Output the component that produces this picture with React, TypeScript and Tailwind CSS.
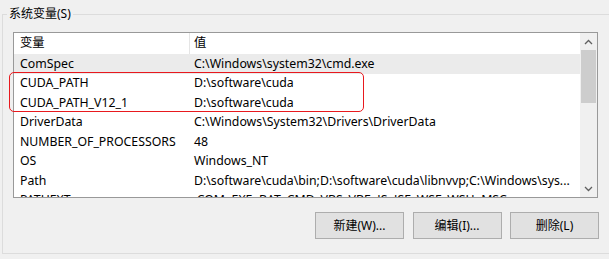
import React from 'react';

const rows = [
  { name: 'ComSpec', value: 'C:\\Windows\\system32\\cmd.exe', selected: true },
  { name: 'CUDA_PATH', value: 'D:\\software\\cuda' },
  { name: 'CUDA_PATH_V12_1', value: 'D:\\software\\cuda' },
  { name: 'DriverData', value: 'C:\\Windows\\System32\\Drivers\\DriverData' },
  { name: 'NUMBER_OF_PROCESSORS', value: '48' },
  { name: 'OS', value: 'Windows_NT' },
  { name: 'Path', value: 'D:\\software\\cuda\\bin;D:\\software\\cuda\\libnvvp;C:\\Windows\\sys...' },
  { name: 'PATHEXT', value: '.COM;.EXE;.BAT;.CMD;.VBS;.VBE;.JS;.JSE;.WSF;.WSH;.MSC' },
];

function Chevron({ up }: { up?: boolean }) {
  return (
    <svg width="9" height="6" viewBox="0 0 9 6" className="block">
      <path
        d={up ? 'M1 5 L4.5 1.5 L8 5' : 'M1 1 L4.5 4.5 L8 1'}
        fill="none"
        stroke="#606060"
        strokeWidth="1.3"
      />
    </svg>
  );
}

function Button({ label }: { label: string }) {
  return (
    <button className="w-[89px] h-[27px] bg-[#e1e1e1] border border-[#adadad] text-[12px] text-black leading-none">
      {label}
    </button>
  );
}

export default function App() {
  return (
    <div
      className="relative w-[609px] h-[259px] overflow-hidden bg-[#f0f0f0] text-black"
      style={{ fontFamily: '"Noto Sans", "Noto Sans CJK SC", sans-serif' }}
    >
      <fieldset className="ml-[2px] mt-[6px] w-[620px] h-[248px] border border-[#dcdcdc] p-0">
        <legend className="ml-[4px] px-[2px] text-[12px] leading-[16px]">系统变量(S)</legend>

        <div className="ml-[10px] mt-[10px] w-[585px] h-[166px] border border-[#999999] bg-white flex">
          <div className="flex-1 overflow-hidden text-[12.3px]">
            <div className="flex h-[21px] items-center">
              <div className="w-[176px] h-full flex items-center pl-[6px] border-r border-[#e5e5e5]">变量</div>
              <div className="pl-[4px]">值</div>
            </div>
            {rows.map((r) => (
              <div
                key={r.name}
                className={`flex h-[19.5px] items-center whitespace-nowrap ${r.selected ? 'bg-[#ebebeb]' : ''}`}
              >
                <div className="w-[176px] pl-[6px]">{r.name}</div>
                <div className="pl-[4px]">{r.value}</div>
              </div>
            ))}
          </div>
          <div className="w-[17px] bg-[#f0f0f0] flex flex-col items-center">
            <div className="h-[17px] flex items-center justify-center">
              <Chevron up />
            </div>
            <div className="w-[15px] h-[53px] bg-[#cdcdcd]" />
            <div className="flex-1" />
            <div className="h-[17px] flex items-center justify-center">
              <Chevron />
            </div>
          </div>
        </div>

        <div className="mt-[14px] w-[596px] flex justify-end gap-[8.5px]">
          <Button label="新建(W)..." />
          <Button label="编辑(I)..." />
          <Button label="删除(L)" />
        </div>
      </fieldset>

      <div className="absolute left-[9px] top-[72px] w-[355px] h-[40px] border border-[#e8191e] rounded-[5px] pointer-events-none" />
    </div>
  );
}
